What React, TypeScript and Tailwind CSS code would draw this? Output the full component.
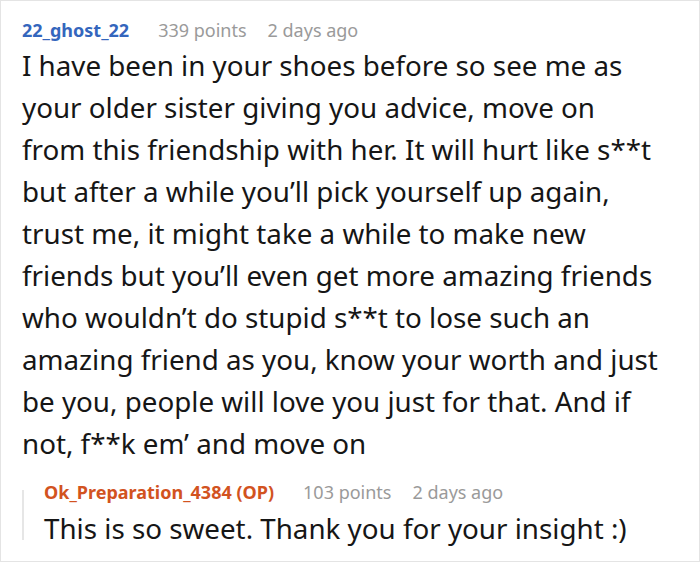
import React from 'react'

const Meta = ({ name, nameClass, points, time }: { name: string; nameClass: string; points: string; time: string }) => (
  <div className="flex items-center text-[18px] leading-[24px] whitespace-nowrap">
    <span className={`font-bold mr-[29px] ${nameClass}`}>{name}</span>
    <span className="text-[#9a9a9a] mr-[21px]">{points}</span>
    <span className="text-[#9a9a9a]">{time}</span>
  </div>
)

const lines = [
  'I have been in your shoes before so see me as',
  'your older sister giving you advice, move on',
  'from this friendship with her. It will hurt like s**t',
  'but after a while you’ll pick yourself up again,',
  'trust me, it might take a while to make new',
  'friends but you’ll even get more amazing friends',
  'who wouldn’t do stupid s**t to lose such an',
  'amazing friend as you, know your worth and just',
  'be you, people will love you just for that. And if',
  'not, f**k em’ and move on',
]

const App = () => {
  return (
    <div className="w-[700px] h-[562px] border border-[#e4e4e4] bg-white pl-[21px] pt-[17px] font-['Noto_Sans',sans-serif] overflow-hidden">
      <Meta name="22_ghost_22" nameClass="text-[#3466bd]" points="339 points" time="2 days ago" />
      <div className="mt-[2px] text-[27.75px] leading-[42px] text-[#161616] whitespace-nowrap">
        {lines.map((l) => (
          <p key={l}>{l}</p>
        ))}
      </div>
      <div className="mt-[16px] flex gap-[20px]">
        <div className="w-[2px] bg-[#e6e6e6] mt-[10px] mb-[9px]" />
        <div>
          <Meta name="Ok_Preparation_4384 (OP)" nameClass="text-[#d2531f]" points="103 points" time="2 days ago" />
          <p className="mt-[3px] text-[27.75px] leading-[42px] text-[#161616] whitespace-nowrap">
            This is so sweet. Thank you for your insight :)
          </p>
        </div>
      </div>
    </div>
  )
}

export default App
